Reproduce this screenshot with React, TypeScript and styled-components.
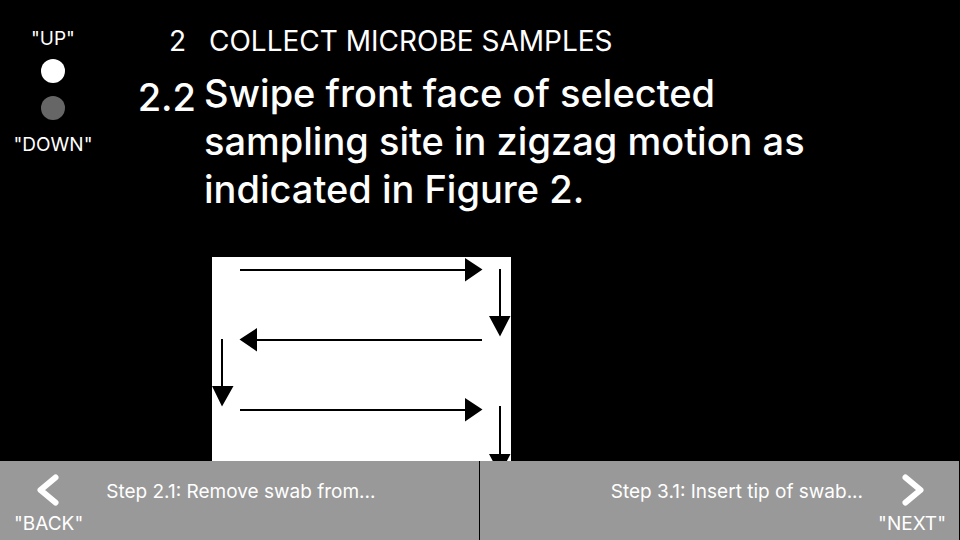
import React from "react";
import styled, { createGlobalStyle } from "styled-components";

const GlobalStyle = createGlobalStyle`
  *, *::before, *::after { box-sizing: border-box; }
  body {
    margin: 0;
    background: #000;
    color: #fff;
    font-family: Inter, "Liberation Sans", sans-serif;
  }
  button {
    border: 0;
    padding: 0;
    background: none;
    color: inherit;
    font: inherit;
    cursor: pointer;
  }
`;

const Screen = styled.div`
  display: flex;
  flex-direction: column;
  height: 100vh;
  overflow: hidden;
`;

const Body = styled.div`
  display: flex;
  flex: 1;
  min-height: 0;
`;

const ScrollControls = styled.aside`
  display: flex;
  flex: none;
  flex-direction: column;
  gap: 13px;
  width: 106px;
  padding-top: 27px;
`;

const ScrollButton = styled.button`
  display: flex;
  flex-direction: column;
  align-items: center;
  gap: 8px;
  font-size: 19px;
  line-height: 24px;
`;

const Dot = styled.span<{ $active?: boolean }>`
  width: 24px;
  height: 24px;
  border-radius: 50%;
  background: ${({ $active }) => ($active ? "#fff" : "#666")};
`;

const DownLabel = styled.span`
  padding-top: 5px;
`;

const Procedure = styled.main`
  flex: 1;
  min-width: 0;
  padding: 24px 120px 0 30px;
  overflow: hidden;
`;

const SectionHeading = styled.h1`
  display: grid;
  grid-template-columns: 50px 1fr;
  column-gap: 23px;
  margin: 0;
  font-size: 28px;
  font-weight: 400;
  line-height: 34px;
`;

const SectionNumber = styled.span`
  text-align: right;
`;

const Step = styled.section`
  display: grid;
  grid-template-columns: 60px 1fr;
  column-gap: 8px;
  margin-top: 11px;
  font-size: 38px;
  font-weight: 500;
  line-height: 48px;
`;

const StepNumber = styled.span`
  padding-top: 4px;
  text-align: right;
`;

const StepText = styled.p`
  margin: 0;
`;

const Figure = styled.figure`
  margin: 44px 0 0 76px;
`;

const Diagram = styled.svg`
  display: block;
  width: 299px;
`;

const StepNav = styled.nav`
  display: grid;
  flex: none;
  grid-template-columns: 1fr 1fr;
`;

const NavButton = styled.button<{ $forward?: boolean }>`
  display: flex;
  flex-direction: ${({ $forward }) => ($forward ? "row-reverse" : "row")};
  align-items: flex-start;
  gap: ${({ $forward }) => ($forward ? "15px" : "23px")};
  height: 79px;
  padding: 12px 13px 0 14px;
  border-right: 1px solid #000;
  background: #999;
  font-size: 19px;
  line-height: 24px;
`;

const NavCue = styled.span`
  display: flex;
  flex-direction: column;
  align-items: center;
  gap: 5px;
`;

const NavTitle = styled.span`
  padding-top: 7px;
  white-space: nowrap;
`;

const Chevron = ({ forward = false }: { forward?: boolean }) => (
  <svg width="24" height="34" viewBox="0 0 24 34" aria-hidden="true">
    <path
      d={forward ? "M5.5 4.500 L20.500 17 L5.5 29.500" : "M18.500 4.500 L3.5 17 L18.500 29.500"}
      fill="none"
      stroke="#fff"
      strokeWidth="6"
      strokeLinecap="round"
      strokeLinejoin="round"
    />
  </svg>
);

const SwipePattern = () => (
  <Diagram viewBox="0 0 299 420" role="img" aria-label="Figure 2: zigzag swipe path">
    <rect width="299" height="420" fill="#fff" />
    <g fill="none" stroke="#000" strokeWidth="2">
      <path d="M28 13H254 M288 12V60 M270 83H44 M10 82V130 M28 153H254 M288 149V198 M270 223H44 M10 222V270 M28 293H254" />
    </g>
    <path
      d="M253 1L270.500 12.500L253 24.500Z M277 59H298.500L288 79.500Z M45 71L27.500 82.500L45 94.500Z M0 129H21.500L10 149.500Z M253 141L270.500 152.500L253 164.500Z M277 197H298.500L288 217.500Z M45 211L27.500 222.500L45 234.500Z M0 269H21.500L10 289.500Z M253 281L270.500 292.500L253 304.500Z"
      fill="#000"
    />
  </Diagram>
);

export default function App() {
  return (
    <>
      <GlobalStyle />
      <Screen>
        <Body>
          <ScrollControls>
            <ScrollButton type="button">
              <span>"UP"</span>
              <Dot $active />
            </ScrollButton>
            <ScrollButton type="button">
              <Dot />
              <DownLabel>"DOWN"</DownLabel>
            </ScrollButton>
          </ScrollControls>
          <Procedure>
            <SectionHeading>
              <SectionNumber>2</SectionNumber>
              <span>COLLECT MICROBE SAMPLES</span>
            </SectionHeading>
            <Step>
              <StepNumber>2.2</StepNumber>
              <StepText>
                Swipe front face of selected sampling site in zigzag motion as
                indicated in Figure 2.
              </StepText>
            </Step>
            <Figure>
              <SwipePattern />
            </Figure>
          </Procedure>
        </Body>
        <StepNav aria-label="Steps">
          <NavButton type="button">
            <NavCue>
              <Chevron />
              <span>"BACK"</span>
            </NavCue>
            <NavTitle>Step 2.1: Remove swab from...</NavTitle>
          </NavButton>
          <NavButton type="button" $forward>
            <NavCue>
              <Chevron forward />
              <span>"NEXT"</span>
            </NavCue>
            <NavTitle>Step 3.1: Insert tip of swab...</NavTitle>
          </NavButton>
        </StepNav>
      </Screen>
    </>
  );
}
